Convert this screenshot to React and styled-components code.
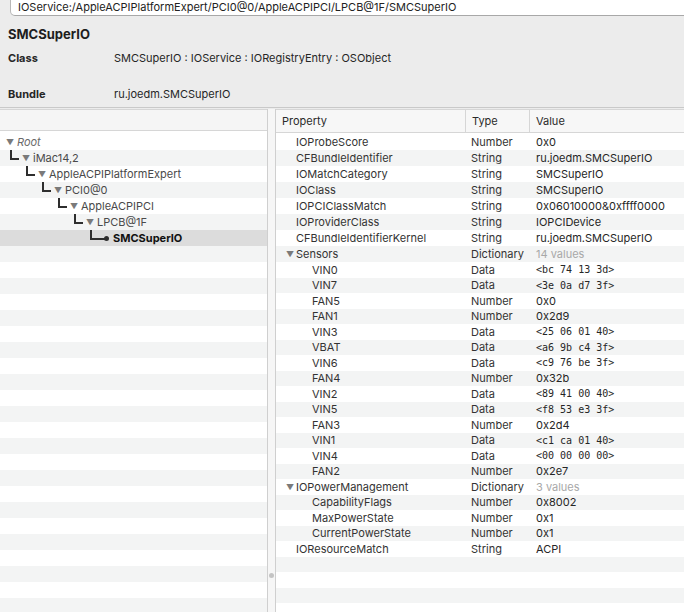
import styled, { createGlobalStyle } from 'styled-components';

const GlobalStyle = createGlobalStyle`
    html, body {
        margin: 0;
        padding: 0;
        background: #ececec;
    }
    body {
        font-family: Inter, "Noto Sans", "Liberation Sans", sans-serif;
        font-size: 11px;
        color: #2a2a2a;
        -webkit-font-smoothing: antialiased;
    }
`

const TREE = [
    { name: 'Root', level: 0, root: true },
    { name: 'iMac14,2', level: 1 },
    { name: 'AppleACPIPlatformExpert', level: 2 },
    { name: 'PCI0@0', level: 3 },
    { name: 'AppleACPIPCI', level: 4 },
    { name: 'LPCB@1F', level: 5 },
    { name: 'SMCSuperIO', level: 6, leaf: true, selected: true },
]

const PROPS = [
    { name: 'IOProbeScore', type: 'Number', value: '0x0' },
    { name: 'CFBundleIdentifier', type: 'String', value: 'ru.joedm.SMCSuperIO' },
    { name: 'IOMatchCategory', type: 'String', value: 'SMCSuperIO' },
    { name: 'IOClass', type: 'String', value: 'SMCSuperIO' },
    { name: 'IOPCIClassMatch', type: 'String', value: '0x06010000&0xffff0000' },
    { name: 'IOProviderClass', type: 'String', value: 'IOPCIDevice' },
    { name: 'CFBundleIdentifierKernel', type: 'String', value: 'ru.joedm.SMCSuperIO' },
    { name: 'Sensors', type: 'Dictionary', value: '14 values', group: true },
    { name: 'VIN0', type: 'Data', value: '<bc 74 13 3d>', child: true, mono: true },
    { name: 'VIN7', type: 'Data', value: '<3e 0a d7 3f>', child: true, mono: true },
    { name: 'FAN5', type: 'Number', value: '0x0', child: true },
    { name: 'FAN1', type: 'Number', value: '0x2d9', child: true },
    { name: 'VIN3', type: 'Data', value: '<25 06 01 40>', child: true, mono: true },
    { name: 'VBAT', type: 'Data', value: '<a6 9b c4 3f>', child: true, mono: true },
    { name: 'VIN6', type: 'Data', value: '<c9 76 be 3f>', child: true, mono: true },
    { name: 'FAN4', type: 'Number', value: '0x32b', child: true },
    { name: 'VIN2', type: 'Data', value: '<89 41 00 40>', child: true, mono: true },
    { name: 'VIN5', type: 'Data', value: '<f8 53 e3 3f>', child: true, mono: true },
    { name: 'FAN3', type: 'Number', value: '0x2d4', child: true },
    { name: 'VIN1', type: 'Data', value: '<c1 ca 01 40>', child: true, mono: true },
    { name: 'VIN4', type: 'Data', value: '<00 00 00 00>', child: true, mono: true },
    { name: 'FAN2', type: 'Number', value: '0x2e7', child: true },
    { name: 'IOPowerManagement', type: 'Dictionary', value: '3 values', group: true },
    { name: 'CapabilityFlags', type: 'Number', value: '0x8002', child: true },
    { name: 'MaxPowerState', type: 'Number', value: '0x1', child: true },
    { name: 'CurrentPowerState', type: 'Number', value: '0x1', child: true },
    { name: 'IOResourceMatch', type: 'String', value: 'ACPI' },
]

// rows below the first group are drawn a touch tighter
const TIGHT_FROM = 8

export default function App() {
    const treeFill = Array.from({ length: 32 - TREE.length })
    const propFill = Array.from({ length: 34 - PROPS.length })

    return (
        <Window>
            <GlobalStyle />
            <PathBar>
                <PathField>IOService:/AppleACPIPlatformExpert/PCI0@0/AppleACPIPCI/LPCB@1F/SMCSuperIO</PathField>
            </PathBar>
            <Info>
                <Title>SMCSuperIO</Title>
                <InfoRow>
                    <InfoLabel>Class</InfoLabel>
                    <span>SMCSuperIO : IOService : IORegistryEntry : OSObject</span>
                </InfoRow>
                <InfoRow $tall>
                    <InfoLabel>Bundle</InfoLabel>
                    <span>ru.joedm.SMCSuperIO</span>
                </InfoRow>
            </Info>
            <Split>
                <TreePane>
                    <TreeHeader />
                    <Rows>
                        {TREE.map((node, i) => (
                            <TreeRow key={node.name} $odd={i % 2 === 1} $selected={node.selected} $level={node.level}>
                                {node.level > 0 && <Elbow $leaf={node.leaf} />}
                                {node.leaf ? <Dot /> : <Disclosure>▼</Disclosure>}
                                <TreeName $root={node.root} $selected={node.selected}>{node.name}</TreeName>
                            </TreeRow>
                        ))}
                        {treeFill.map((_, i) => (
                            <TreeRow key={'f' + i} $odd={(i + TREE.length) % 2 === 1} />
                        ))}
                    </Rows>
                </TreePane>
                <Splitter>
                    <Grip />
                </Splitter>
                <PropPane>
                    <PropHeader>
                        <HeadCell $w={190}>Property</HeadCell>
                        <HeadCell $w={64}>Type</HeadCell>
                        <HeadCell $last>Value</HeadCell>
                    </PropHeader>
                    <Rows>
                        {PROPS.map((p, i) => (
                            <PropRow key={p.name + i} $odd={i % 2 === 1} $tight={i >= TIGHT_FROM}>
                                <NameCell $indent={p.child ? 36 : 20}>
                                    {p.group && <Disclosure $prop>▼</Disclosure>}
                                    {p.name}
                                </NameCell>
                                <TypeCell>{p.type}</TypeCell>
                                <ValueCell $mono={p.mono} $muted={p.group}>{p.value}</ValueCell>
                            </PropRow>
                        ))}
                        {propFill.map((_, i) => (
                            <PropRow key={'f' + i} $odd={(i + PROPS.length) % 2 === 1} $tight />
                        ))}
                    </Rows>
                </PropPane>
            </Split>
        </Window>
    )
}

const Window = styled.div`
    width: 684px;
    height: 612px;
    overflow: hidden;
    display: flex;
    flex-direction: column;
    background: #ececec;
`

const PathBar = styled.div`
    height: 16px;
    padding-left: 10px;
    flex-shrink: 0;
`

const PathField = styled.div`
    height: 15px;
    line-height: 15px;
    padding-left: 7px;
    background: #fff;
    border-left: 1px solid #b8b8b8;
    border-bottom: 1px solid #a8a8a8;
    border-bottom-left-radius: 5px;
    color: #222;
    white-space: nowrap;
`

const Info = styled.div`
    height: 92px;
    padding: 8px 0 0 8px;
    box-sizing: border-box;
    flex-shrink: 0;
    border-bottom: 1px solid #c9c9c9;
`

const Title = styled.div`
    font-size: 13px;
    font-weight: 700;
    color: #1e1e1e;
    height: 20px;
    line-height: 20px;
`

const InfoRow = styled.div`
    display: flex;
    height: ${(props) => props.$tall ? '29px' : '28px'};
    align-items: ${(props) => props.$tall ? 'flex-end' : 'center'};
    line-height: 14px;
    color: #262626;
`

const InfoLabel = styled.span`
    width: 106px;
    font-weight: 700;
`

const Split = styled.div`
    flex: 1;
    display: flex;
    min-height: 0;
    margin-top: 1px;
`

const TreePane = styled.div`
    width: 267px;
    flex-shrink: 0;
    display: flex;
    flex-direction: column;
    background: #fff;
    border-right: 1px solid #cfcfcf;
`

const TreeHeader = styled.div`
    height: 20px;
    flex-shrink: 0;
    background: #f5f5f5;
    border-top: 1px solid #d6d6d6;
    border-bottom: 1px solid #d6d6d6;
    margin-bottom: 3px;
`

const Rows = styled.div`
    flex: 1;
    overflow: hidden;
    background: #fff;
`

const TreeRow = styled.div`
    height: 16px;
    display: flex;
    align-items: center;
    padding-left: ${(props) => props.$level ? 10 + (props.$level - 1) * 16 : 6}px;
    background: ${(props) => props.$selected ? '#dcdcdc' : props.$odd ? '#f3f4f4' : '#fff'};
    white-space: nowrap;
`

const Elbow = styled.span`
    align-self: flex-start;
    width: ${(props) => props.$leaf ? '13px' : '7px'};
    height: 8px;
    margin-right: ${(props) => props.$leaf ? '0' : '3px'};
    border-left: 2px solid #2e2e2e;
    border-bottom: 2px solid #2e2e2e;
    flex-shrink: 0;
`

const Dot = styled.span`
    width: 5px;
    height: 5px;
    border-radius: 50%;
    background: #2e2e2e;
    margin: 0 4px 0 -1px;
    flex-shrink: 0;
`

const Disclosure = styled.span`
    font-size: 8px;
    color: #7a7a7a;
    width: ${(props) => props.$prop ? '10px' : '11px'};
    margin-left: ${(props) => props.$prop ? '-10px' : '0'};
    flex-shrink: 0;
    line-height: 16px;
`

const TreeName = styled.span`
    color: ${(props) => props.$selected ? '#111' : props.$root ? '#6a6a6a' : '#4a4a4a'};
    font-weight: ${(props) => props.$selected ? 700 : 400};
    font-style: ${(props) => props.$root ? 'italic' : 'normal'};
`

const Splitter = styled.div`
    width: 8px;
    flex-shrink: 0;
    background: #f6f6f6;
    border-right: 1px solid #cfcfcf;
    display: flex;
    align-items: flex-end;
    justify-content: center;
    padding-bottom: 34px;
    box-sizing: border-box;
`

const Grip = styled.span`
    width: 5px;
    height: 5px;
    border-radius: 50%;
    background: #c4c4c4;
`

const PropPane = styled.div`
    flex: 1;
    display: flex;
    flex-direction: column;
    background: #fff;
    min-width: 0;
`

const PropHeader = styled.div`
    height: 22px;
    flex-shrink: 0;
    display: flex;
    background: #f7f7f7;
    border-top: 1px solid #d6d6d6;
    border-bottom: 1px solid #d6d6d6;
    margin-bottom: 1px;
`

const HeadCell = styled.div`
    width: ${(props) => props.$w ? props.$w + 'px' : 'auto'};
    flex: ${(props) => props.$last ? 1 : 'none'};
    box-sizing: border-box;
    padding-left: 6px;
    line-height: 22px;
    color: #2a2a2a;
    border-right: ${(props) => props.$last ? 'none' : '1px solid #d6d6d6'};
`

const PropRow = styled.div`
    height: ${(props) => props.$tight ? '15.5px' : '16px'};
    display: flex;
    align-items: center;
    background: ${(props) => props.$odd ? '#f3f4f4' : '#fff'};
    white-space: nowrap;
`

const NameCell = styled.div`
    width: 195px;
    padding-left: ${(props) => props.$indent}px;
    box-sizing: border-box;
    display: flex;
    align-items: center;
    color: #333;
`

const TypeCell = styled.div`
    width: 64px;
    color: #333;
`

const ValueCell = styled.div`
    flex: 1;
    padding-left: 1px;
    color: ${(props) => props.$muted ? '#a8a8a8' : '#262626'};
    font-family: ${(props) => props.$mono ? '"DejaVu Sans Mono", "Liberation Mono", monospace' : 'inherit'};
    font-size: ${(props) => props.$mono ? '10px' : '11px'};
`
